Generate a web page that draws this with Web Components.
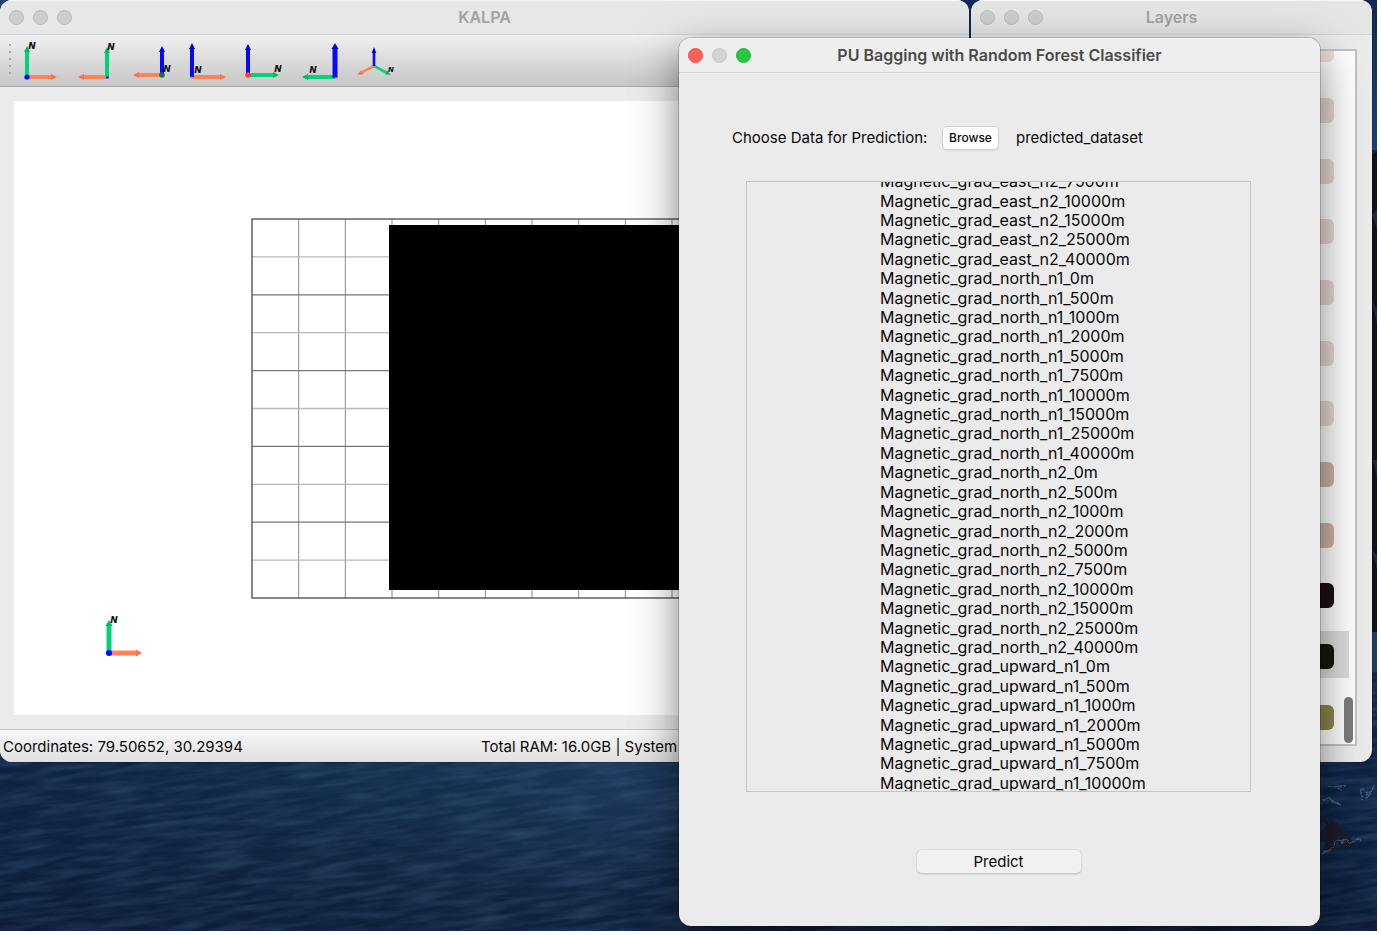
<!DOCTYPE html>
<html lang="en">
<head>
<meta charset="utf-8">
<title>KALPA</title>
<style>
  html, body { margin: 0; height: 100%; background: #fff; }
  body { font: 15px/20px Inter, "Liberation Sans", sans-serif; color: #080808; overflow: hidden; }
</style>
</head>
<body>
<desk-top>
  <app-window class="main" label="KALPA">
    <view-toolbar></view-toolbar>
    <map-view></map-view>
    <status-bar><span>Coordinates: 79.50652, 30.29394</span><span slot="system">Total RAM: 16.0GB | System</span></status-bar>
  </app-window>
  <app-window class="layers" label="Layers"><layer-list></layer-list></app-window>
  <app-window class="dialog" label="PU Bagging with Random Forest Classifier" active><predict-form></predict-form></app-window>
</desk-top>
<script>
class Base extends HTMLElement {
  connectedCallback() {
    if (this.shadowRoot) return;
    this.attachShadow({ mode: 'open' }).innerHTML = this.render();
    if (this.ready) this.ready();
  }
}

class DeskTop extends Base {
  render() {
    return `<style>
      :host { display: block; position: relative; box-sizing: border-box; height: calc(100% - 4px); margin-right: 4px; overflow: hidden; background: #12294c; }
      .wall { position: absolute; inset: 0; width: 100%; height: 100%; }
      ::slotted(app-window) { position: absolute; }
      ::slotted(.main) { inset: 0 408px 169px 0; }
      ::slotted(.layers) { inset: 0 5px 169px 971px; }
      ::slotted(.dialog) { inset: 38px 57px 5px 679px; }
    </style>
    <svg class="wall" viewBox="0 0 1377 931" preserveAspectRatio="none" aria-hidden="true">
      <defs>
        <radialGradient id="sea" gradientUnits="userSpaceOnUse" cx="640" cy="810" r="660" gradientTransform="matrix(1 -.06 0 .5 0 442)">
          <stop offset="0" stop-color="#1f3c60"/><stop offset=".4" stop-color="#14304f"/><stop offset="1" stop-color="#0d2345"/>
        </radialGradient>
        <linearGradient id="sky" x1="0" x2="0" y1="0" y2="1"><stop offset="0" stop-color="#0f2a52"/><stop offset="1" stop-color="#1d4070"/></linearGradient>
        <linearGradient id="deep" x1="0" x2="0" y1="0" y2="1"><stop offset="0" stop-color="#0a1730" stop-opacity="0"/><stop offset="1" stop-color="#0a1730" stop-opacity=".65"/></linearGradient>
        <filter id="waves" x="0" y="0" width="100%" height="100%">
          <feTurbulence type="fractalNoise" baseFrequency=".02 .15" numOctaves="5" seed="8"/>
          <feColorMatrix values="0 0 0 0 .24  0 0 0 0 .4  0 0 0 0 .6  1.2 0 0 0 -.45"/>
        </filter>
        <filter id="troughs" x="0" y="0" width="100%" height="100%">
          <feTurbulence type="fractalNoise" baseFrequency=".025 .17" numOctaves="5" seed="21"/>
          <feColorMatrix values="0 0 0 0 .02  0 0 0 0 .05  0 0 0 0 .13  1.6 0 0 0 -.6"/>
        </filter>
        <filter id="foam" x="0" y="0" width="100%" height="100%">
          <feTurbulence type="fractalNoise" baseFrequency=".09" numOctaves="3" seed="4" result="n"/>
          <feDisplacementMap in="SourceGraphic" in2="n" scale="16"/>
        </filter>
      </defs>
      <rect width="1377" height="931" fill="url(#sea)"/>
      <rect x="0" y="740" width="1377" height="191" fill="url(#deep)"/>
      <g transform="rotate(-7 400 850)">
        <rect x="-60" y="680" width="1500" height="400" filter="url(#waves)" opacity=".3"/>
        <rect x="-60" y="680" width="1500" height="400" filter="url(#troughs)" opacity=".4"/>
      </g>
      <rect width="1377" height="150" fill="url(#sky)"/>
      <rect width="60" height="30" fill="#26406e"/>
      <path d="M1365 148l7 6 5-2v480h-12z" fill="#0b111d"/>
      <path d="M1372 215l5-6v20zM1372 300l5 10v14zM1373 460h4v18zM1372 550l5 5v14z" fill="#1c2740"/>
      <path d="M1365 632h12v40h-12z" fill="#1d3c66"/>
      <g filter="url(#foam)">
        <path d="M1322 817l16 6 14 20-8 4-14 5-8 2z" fill="#1d1d2a"/>
        <path d="M1322 850q12 0 20-7t16-6M1326 785l20 1M1324 801h14M1362 800q4-12 15-15M1322 855l10-5" fill="none" stroke="#496f98" stroke-width="2" opacity=".65"/>
      </g>
    </svg><slot></slot>`;
  }
}

class AppWindow extends Base {
  render() {
    return `<style>
      :host { display: flex; flex-direction: column; border-radius: 12px; overflow: hidden; background: #ebebeb; box-shadow: 0 0 0 1px rgba(0,0,0,.15); }
      :host(.layers) { --bar: #e4e6e4; }
      :host([active]) { --bar: #eeeeee; --ink: #4a4a4a; box-shadow: 0 0 0 1px rgba(0,0,0,.18), 0 16px 44px rgba(0,0,0,.5); }
      header { flex: none; display: grid; grid-template-columns: 80px 1fr 80px; align-items: center; height: 34px; border-bottom: 1px solid #d4d4d4; background: var(--bar, #e6e7e9); box-shadow: inset 0 1px #f6f6f6; }
      .lights { display: flex; gap: 9px; padding-left: 9px; }
      i { box-sizing: border-box; width: 15px; height: 15px; border-radius: 50%; background: #cdcecf; border: 1px solid #bababb; }
      :host([active]) i { background: #d3d3d3; border-color: #c6c6c6; }
      :host([active]) i:first-child { background: #ff5f57; border-color: #ee5149; }
      :host([active]) i:last-child { background: #28c840; border-color: #21b636; }
      h1 { margin: 0; font-size: 16px; line-height: 20px; font-weight: 600; text-align: center; color: var(--ink, #a2a3a4); white-space: nowrap; }
      main { flex: 1; min-height: 0; display: flex; flex-direction: column; }
    </style>
    <header><div class="lights"><i></i><i></i><i></i></div><h1>${this.getAttribute('label')}</h1></header>
    <main><slot></slot></main>`;
  }
}

const GREEN = '#00d47a', ORANGE = '#ff8258', BLUE = '#0808ff';
/* An axis arrow from (x1,y1) to its tip (x2,y2). */
function arrow(x1, y1, x2, y2, color, w = 4) {
  const len = Math.hypot(x2 - x1, y2 - y1), ux = (x2 - x1) / len, uy = (y2 - y1) / len;
  const bx = x2 - ux * 6, by = y2 - uy * 6, h = w / 2 + 1;
  const tip = { [GREEN]: '#00b868', [ORANGE]: '#ff7048', [BLUE]: '#0000dd' }[color];
  return `<path d="M${x1} ${y1}L${bx} ${by}" stroke="${color}" stroke-width="${w}"/>
    <path d="M${x2} ${y2}L${bx - uy * h} ${by + ux * h}L${bx + uy * h} ${by - ux * h}z" fill="${tip}"/>`;
}
const north = (x, y, s = 9) => `<text x="${x}" y="${y}" font-size="${s}" font-family="DejaVu Sans, sans-serif" font-weight="700" font-style="italic" text-anchor="middle" fill="#111">N</text>`;
const dot = (x, y, r, c) => `<circle cx="${x}" cy="${y}" r="${r}" fill="${c}"/>`;

class ViewToolbar extends Base {
  render() {
    const views = [
      ['Top', arrow(14, 42, 44, 42, ORANGE) + arrow(14, 42, 14, 11, GREEN) + dot(14, 42, 2.6, BLUE) + north(19, 14)],
      ['Bottom', arrow(38, 42, 9, 42, ORANGE) + arrow(38, 42, 38, 12, GREEN) + dot(38.5, 42.5, 1.3, BLUE) + north(42, 15)],
      ['Front', arrow(37, 40, 8, 40, ORANGE) + arrow(37, 40, 37, 11, BLUE) + north(42, 37) + dot(37, 40, 2.8, '#087a40')],
      ['Back', arrow(11, 42, 45, 42, ORANGE) + arrow(11, 42, 11, 8, BLUE) + north(17, 38) + dot(10, 42.5, 1, GREEN)],
      ['Right', arrow(11, 40, 42, 40, GREEN) + arrow(11, 40, 11, 9, BLUE) + dot(11, 40, 2.8, '#ff4030') + north(41, 37)],
      ['Left', arrow(42, 42, 9, 42, GREEN) + arrow(42, 43, 42, 8, BLUE, 5) + north(20, 38) + dot(43, 43, 1, ORANGE)],
      ['Isometric', arrow(25, 31, 8, 40, ORANGE, 2.6) + arrow(25, 31, 42, 40, GREEN, 2.6) + arrow(25, 31, 25, 12, BLUE, 2.6) + north(42, 37, 7)]
    ];
    return `<style>
      :host { display: flex; flex: none; height: 51px; border-bottom: 1px solid #a8a8a8; background: linear-gradient(#f0f0f0, #c6c6c6); }
      .grip { display: flex; flex-direction: column; gap: 5px; width: 4px; padding: 9px 0 0 9px; }
      .grip i { width: 2px; height: 2px; border-radius: 50%; background: #989898; }
      button { display: block; width: 56px; height: 51px; padding: 0; border: 0; background: none; }
      svg { display: block; width: 56px; height: 51px; overflow: visible; }
    </style><div class="grip"><i></i><i></i><i></i><i></i><i></i></div>` +
      views.map(([n, s]) => `<button aria-label="${n} view"><svg viewBox="0 0 56 51">${s}</svg></button>`).join('');
  }
}

class MapView extends Base {
  render() {
    let lines = '';
    for (let i = 1; i < 10; i++) {
      const x = 238 + i * 46.67, y = 118 + i * 37.9;
      lines += `<path d="M${x} 118V497" stroke="#888" stroke-width="1"/><path d="M238 ${y}H704" stroke="${i % 2 ? '#b8b8b8' : '#777'}" stroke-width="1.3"/>`;
    }
    return `<style>
      :host { display: flex; flex: 1; min-height: 0; padding: 14px; border-bottom: 1px solid #c4c4c4; }
      svg { flex: 1; width: 100%; background: #fff; }
    </style><svg role="img" aria-label="Map grid">${lines}
      <rect x="238" y="118" width="466" height="379" fill="none" stroke="#555" stroke-width="1.4"/>
      <rect x="375" y="124" width="318" height="365" fill="#000"/>
      ${arrow(95, 552, 128, 552, ORANGE, 5)}${arrow(95, 552, 95, 519, GREEN, 5)}${dot(95, 552, 3, BLUE)}${north(100, 522)}
    </svg>`;
  }
}

class StatusBar extends Base {
  render() {
    return `<style>
      :host { display: grid; grid-template-columns: 478px 1fr; flex: none; align-items: center; height: 30px; padding: 2px 0 0 3px; background: linear-gradient(#f8f8f8, #e0e0e0); white-space: nowrap; }
    </style><slot></slot><slot name="system"></slot>`;
  }
}

class LayerList extends Base {
  render() {
    const colors = ['#efdfda', '#e6d8d5', '#e6d8d5', '#e6d8d5', '#e6d8d5', '#e6d8d5', '#e6d8d5', '#cfb3a7', '#cfb3a7', '#181010', '#18140e', '#8c8650'];
    return `<style>
      :host { position: relative; display: flex; flex: 1; min-height: 0; margin: 14px 15px 16px 14px; border: 2px solid #c2c2c2; background: #fff; }
      ul { flex: 1; margin: 0; padding: 0; list-style: none; overflow-y: auto; scrollbar-width: none; display: grid; grid-template-rows: 728px; }
      .rows { display: grid; grid-auto-rows: 1fr; }
      li { display: flex; align-items: center; justify-content: flex-end; margin: 4px 6px 9px 0; padding: 4px 15px 0 0; }
      li.on { background: #dcdcdc; }
      li span { width: 60px; height: 25px; border-radius: 6px; }
      .thumb { position: absolute; right: 2px; bottom: 1px; width: 9px; height: 46px; border-radius: 5px; background: #7c7c7c; }
    </style><ul><div class="rows" role="presentation">${colors.map((c, i) => `<li class="${i === 10 ? 'on' : ''}"><span style="background:${c}"></span></li>`).join('')}</div></ul><div class="thumb"></div>`;
  }
  ready() { this.shadowRoot.querySelector('ul').scrollTop = 31; }
}

class PredictForm extends Base {
  render() {
    const depths = [0, 500, 1000, 2000, 5000, 7500, 10000, 15000, 25000, 40000];
    const names = (part, list) => list.map(d => `Magnetic_grad_${part}_${d}m`);
    const rows = [...names('east_n2', depths.slice(5)), ...names('north_n1', depths), ...names('north_n2', depths), ...names('upward_n1', depths.slice(0, 7))];
    return `<style>
      :host { display: flex; flex-direction: column; flex: 1; min-height: 0; padding: 53px 69px 52px 67px; }
      .pick { display: flex; align-items: center; height: 24px; margin: 0 -15px 31px -14px; white-space: nowrap; }
      label { width: 210px; }
      button { box-sizing: border-box; padding: 0; font: inherit; color: #080808; border: 1px solid #d2d2d2; border-radius: 5px; background: #fff; box-shadow: 0 1px 1px rgba(0,0,0,.08); }
      .pick button { width: 57px; height: 24px; margin-right: 17px; font-size: 12px; font-weight: 500; }
      .list { flex: 1; min-height: 0; overflow-y: auto; scrollbar-width: none; border: 1px solid #c4c4c4; }
      ul { display: grid; grid-auto-rows: 1fr; height: 621px; margin: 0; padding: 0 0 0 133px; list-style: none; font-size: 16px; }
      li { display: flex; align-items: center; line-height: 19px; }
      .go { align-self: center; width: 166px; height: 25px; margin-top: 57px; border-color: #dcdcdc #dadada #c8c8c8; background: #f1f1f1; border-radius: 6px; }
    </style>
    <div class="pick"><label for="browse">Choose Data for Prediction:</label><button id="browse">Browse</button><span>predicted_dataset</span></div>
    <div class="list" tabindex="-1"><ul>${rows.map(r => `<li>${r}</li>`).join('')}</ul></div>
    <button class="go">Predict</button>`;
  }
  ready() { this.shadowRoot.querySelector('.list').scrollTop = 10; }
}

customElements.define('desk-top', DeskTop);
customElements.define('app-window', AppWindow);
customElements.define('view-toolbar', ViewToolbar);
customElements.define('map-view', MapView);
customElements.define('status-bar', StatusBar);
customElements.define('layer-list', LayerList);
customElements.define('predict-form', PredictForm);
</script>
</body>
</html>
